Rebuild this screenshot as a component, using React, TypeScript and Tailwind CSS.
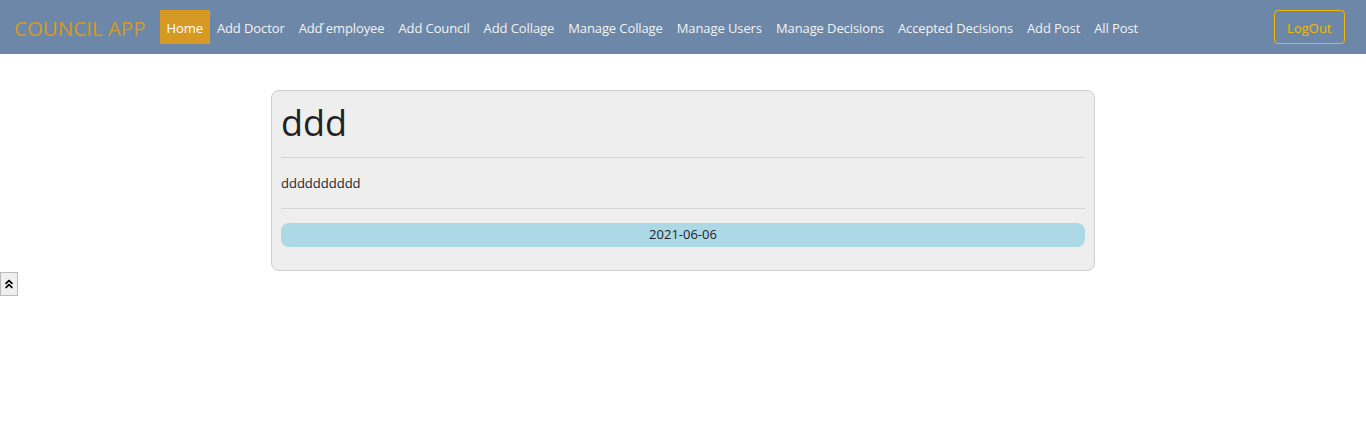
import { ChevronsUp } from 'lucide-react'

const links = [
  'Add Doctor',
  'Add \u0301employee',
  'Add Council',
  'Add Collage',
  'Manage Collage',
  'Manage Users',
  'Manage Decisions',
  'Accepted Decisions',
  'Add Post',
  'All Post',
]

export default function App() {
  return (
    <div className="min-h-[427px] bg-white font-['Open_Sans',sans-serif] text-[#212529]">
      {/* Navbar */}
      <nav className="flex h-[54px] items-center bg-[#6c87a8] pl-[14px] pr-[21px]">
        <span className="mr-[14px] pt-[3px] text-[20.5px] leading-none text-[#d69a24]">COUNCIL APP</span>
        <a className="flex h-[34px] items-center bg-[#d69a24] px-[7px] pt-[3px] text-[13px] tracking-[-0.1px] text-white">
          Home
        </a>
        {links.map((l) => (
          <a key={l} className="px-[7px] pt-[3px] text-[13px] tracking-[-0.1px] text-[#f3f3f3]">
            {l}
          </a>
        ))}
        <button className="ml-auto h-[34px] rounded-[4px] border border-[#f5b700] px-[12.5px] pt-[3px] text-[13px] text-[#f5b700]">
          LogOut
        </button>
      </nav>

      {/* Post */}
      <main className="flex justify-center pt-[36px]">
        <div className="w-[824px] rounded-[8px] border border-[#cfcfcf] bg-[#eeeeee] px-[9px] pb-[23px] pt-[10px]">
          <h1 className="text-[36px] leading-[1.2] text-[#222]">ddd</h1>
          <hr className="mt-[13px] border-[#d6d6d6]" />
          <p className="py-[16px] text-[13px] leading-[18px]">dddddddddd</p>
          <hr className="border-[#d6d6d6]" />
          <div className="mt-[14px] flex h-[24px] items-center justify-center rounded-[8px] bg-[#add8e6] text-[13px]">
            2021-06-06
          </div>
        </div>
      </main>

      <button className="mt-[1px] flex h-[24px] w-[18px] items-center justify-center border border-[#bbb] bg-[#efefef]">
        <ChevronsUp size={14} strokeWidth={3} className="text-black" />
      </button>
    </div>
  )
}
